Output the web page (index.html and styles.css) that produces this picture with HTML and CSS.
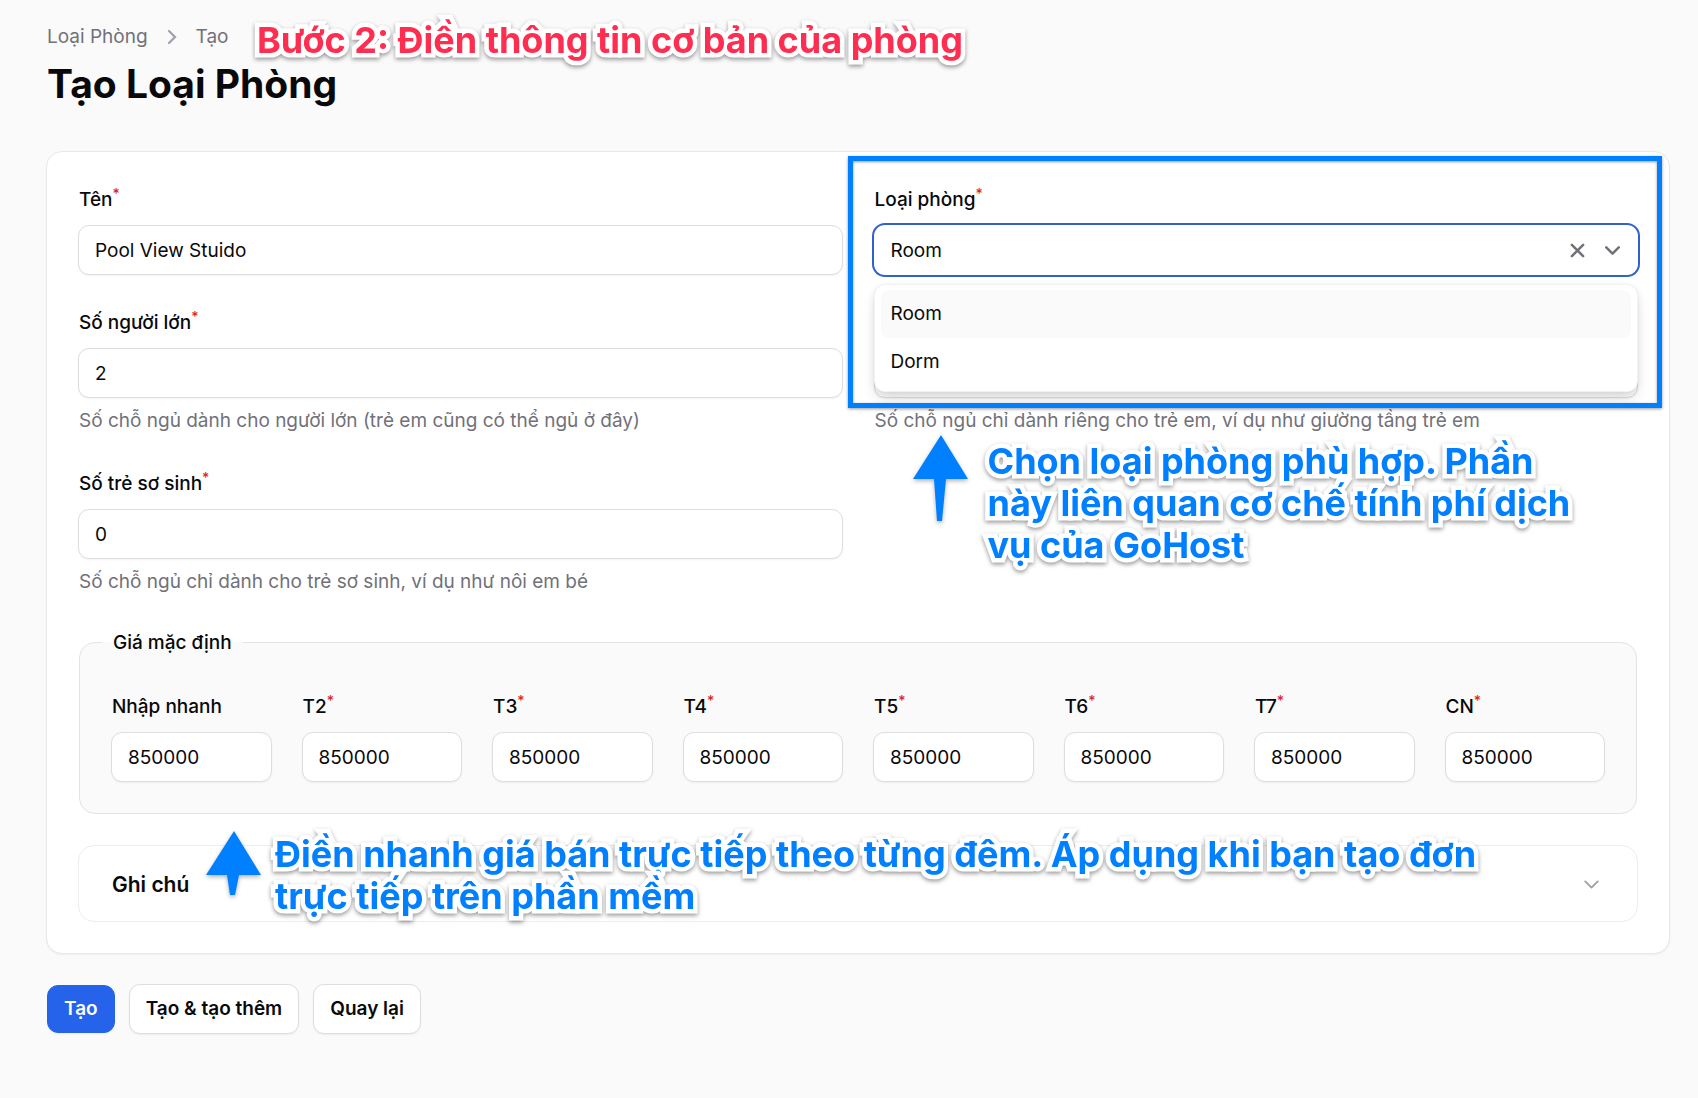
FILE: index.html
```
<!DOCTYPE html>
<html lang="vi">
<head>
    <meta charset="UTF-8">
    <meta name="viewport" content="width=device-width, initial-scale=1.0">
    <title>Tạo Loại Phòng</title>
    <link rel="stylesheet" href="styles.css">
</head>
<body>
    <main class="page">
        <header class="page-header">
            <nav class="breadcrumbs">
                <a href="#">Loại Phòng</a>
                <svg class="breadcrumb-icon" viewBox="0 0 24 24">
                    <path d="M8 4l8 8-8 8"/>
                </svg>
                <a href="#">Tạo</a>
            </nav>
            <h1 class="page-title">Tạo Loại Phòng</h1>
            <p class="note note-step">Bước 2: Điền thông tin cơ bản của phòng</p>
        </header>

        <form class="room-form">
            <div class="card">
                <div class="fields">
                    <div class="field">
                        <label for="name">Tên<sup>*</sup></label>
                        <input class="input" type="text" id="name" value="Pool View Stuido">
                    </div>

                    <div class="field field-type">
                        <label for="type">Loại phòng<sup>*</sup></label>
                        <div class="select-box">
                            <select id="type">
                                <option selected>Room</option>
                                <option>Dorm</option>
                            </select>
                            <button type="button" class="clear-btn" aria-label="Xóa">
                                <svg viewBox="0 0 24 24">
                                    <path d="M3 3l18 18M21 3L3 21"/>
                                </svg>
                            </button>
                            <svg class="select-arrow" viewBox="0 0 24 24">
                                <path d="M2 7l10 10L22 7"/>
                            </svg>
                        </div>
                        <div class="dropdown" role="listbox">
                            <div class="dropdown-item active" role="option">Room</div>
                            <div class="dropdown-item" role="option">Dorm</div>
                        </div>
                        <div class="highlight"></div>
                    </div>

                    <div class="field">
                        <label for="adults">Số người lớn<sup>*</sup></label>
                        <input class="input" type="text" id="adults" value="2">
                        <p class="hint">Số chỗ ngủ dành cho người lớn (trẻ em cũng có thể ngủ ở đây)</p>
                    </div>

                    <div class="field field-children">
                        <input class="input" type="text" id="children" aria-label="Số trẻ em">
                        <p class="hint">Số chỗ ngủ chỉ dành riêng cho trẻ em, ví dụ như giường tầng trẻ em</p>
                        <svg class="arrow arrow-type" viewBox="0 0 56 88">
                            <path d="M29 1L56 45H34L30 87H25L22 45H1z"/>
                        </svg>
                        <p class="note note-type">Chọn loại phòng phù hợp. Phần<br>này liên quan cơ chế tính phí dịch<br>vụ của GoHost</p>
                    </div>

                    <div class="field">
                        <label for="infants">Số trẻ sơ sinh<sup>*</sup></label>
                        <input class="input" type="text" id="infants" value="0">
                        <p class="hint">Số chỗ ngủ chỉ dành cho trẻ sơ sinh, ví dụ như nôi em bé</p>
                    </div>
                </div>

                <fieldset class="prices">
                    <legend>Giá mặc định</legend>
                    <div class="price-grid">
                        <div class="field">
                            <label for="quick">Nhập nhanh</label>
                            <input class="input" type="text" id="quick" value="850000">
                        </div>
                        <div class="field">
                            <label for="t2">T2<sup>*</sup></label>
                            <input class="input" type="text" id="t2" value="850000">
                        </div>
                        <div class="field">
                            <label for="t3">T3<sup>*</sup></label>
                            <input class="input" type="text" id="t3" value="850000">
                        </div>
                        <div class="field">
                            <label for="t4">T4<sup>*</sup></label>
                            <input class="input" type="text" id="t4" value="850000">
                        </div>
                        <div class="field">
                            <label for="t5">T5<sup>*</sup></label>
                            <input class="input" type="text" id="t5" value="850000">
                        </div>
                        <div class="field">
                            <label for="t6">T6<sup>*</sup></label>
                            <input class="input" type="text" id="t6" value="850000">
                        </div>
                        <div class="field">
                            <label for="t7">T7<sup>*</sup></label>
                            <input class="input" type="text" id="t7" value="850000">
                        </div>
                        <div class="field">
                            <label for="cn">CN<sup>*</sup></label>
                            <input class="input" type="text" id="cn" value="850000">
                        </div>
                    </div>
                </fieldset>

                <section class="notes">
                    <button type="button" class="notes-toggle">
                        <span>Ghi chú</span>
                        <svg viewBox="0 0 24 24">
                            <path d="M2 7l10 10L22 7"/>
                        </svg>
                    </button>
                    <svg class="arrow arrow-price" viewBox="0 0 56 66">
                        <path d="M29 1L56 45H34L30 65H25L22 45H1z"/>
                    </svg>
                    <p class="note note-price">Điền nhanh giá bán trực tiếp theo từng đêm. Áp dụng khi bạn tạo đơn<br>trực tiếp trên phần mềm</p>
                </section>
            </div>

            <div class="actions">
                <button type="submit" class="btn btn-primary">Tạo</button>
                <button type="button" class="btn">Tạo &amp; tạo thêm</button>
                <button type="button" class="btn">Quay lại</button>
            </div>
        </form>
    </main>
</body>
</html>
```
FILE: styles.css
```
* {
    box-sizing: border-box;
    margin: 0;
    padding: 0;
}

body {
    font-family: Inter, 'Open Sans', sans-serif;
    font-size: 19px;
    line-height: 32px;
    color: #09090b;
    background-color: #fafafa;
}

input,
select,
button {
    font: inherit;
    color: inherit;
}

.page {
    padding: 21px 28px 32px 46px;
}

/* Header */
.page-header {
    position: relative;
    margin-bottom: 39px;
}

.breadcrumbs {
    display: flex;
    align-items: center;
    gap: 12px;
    padding-left: 1px;
}

.breadcrumbs a {
    color: #71717a;
    text-decoration: none;
}

.breadcrumb-icon {
    width: 24px;
    height: 18px;
    fill: none;
    stroke: #a1a1aa;
    stroke-width: 3;
    stroke-linecap: round;
}

.page-title {
    padding: 3px 0 0 1px;
    font-size: 39px;
    font-weight: 700;
    line-height: 56px;
}

/* Card and fields */
.card {
    padding: 31px;
    background: white;
    border: 1px solid #e8e8ea;
    border-radius: 16px;
    box-shadow: 0 1px 2px rgba(0, 0, 0, 0.05);
}

.fields {
    display: grid;
    grid-template-columns: 1fr 1fr;
    gap: 31px;
}

.field {
    position: relative;
    min-width: 0;
}

.field label {
    display: block;
    padding-left: 1px;
    margin-bottom: 8px;
    font-weight: 500;
    line-height: 34px;
}

.field sup {
    font-size: 14px;
    line-height: 0;
    color: #dc2626;
}

/* the open list covers the label row of this field */
.field-children {
    padding-top: 42px;
}

.input {
    display: block;
    width: 100%;
    height: 50px;
    padding: 0 16px;
    background: white;
    border: 1px solid #dededf;
    border-radius: 11px;
    box-shadow: 0 1px 2px rgba(0, 0, 0, 0.05);
}

.hint {
    margin-top: 8px;
    padding-left: 1px;
    line-height: 30px;
    color: #71717a;
}

.select-box {
    display: flex;
    align-items: center;
    height: 50px;
    padding-right: 18px;
    background: white;
    border-radius: 11px;
    box-shadow: 0 0 0 2px #2f62cc;
}

.select-box select {
    flex: 1;
    height: 50px;
    padding: 1px 0 0 17px;
    border: none;
    background: none;
    appearance: none;
    outline: none;
}

.clear-btn {
    display: flex;
    margin-right: 20px;
    border: none;
    background: none;
    cursor: pointer;
}

.clear-btn svg,
.select-arrow,
.notes-toggle svg {
    width: 15px;
    height: 15px;
    fill: none;
    stroke: #71717a;
    stroke-width: 4;
    stroke-linecap: round;
    stroke-linejoin: round;
}

.dropdown {
    position: absolute;
    z-index: 2;
    top: 101px;
    left: 0;
    right: 0;
    padding: 5px 6px;
    background: white;
    border: 1px solid #f2f2f3;
    border-radius: 11px;
    box-shadow: 0 10px 16px -2px rgba(0, 0, 0, 0.1), 0 2px 6px rgba(0, 0, 0, 0.1);
}

.dropdown-item {
    padding: 8px 10px;
    border-radius: 8px;
}

.dropdown-item.active {
    background: #fafafa;
}

/* Default prices */
.prices {
    min-width: 0;
    margin: 28px 1px 31px;
    padding: 31px;
    background: #fafafa;
    border: 1px solid #e4e4e7;
    border-radius: 16px;
}

.prices legend {
    margin-left: -9px;
    padding: 2px 11px 0;
    font-weight: 500;
}

.price-grid {
    display: grid;
    grid-template-columns: repeat(8, 1fr);
    gap: 30px;
}

/* Notes */
.notes {
    position: relative;
}

.notes-toggle {
    display: flex;
    justify-content: space-between;
    align-items: center;
    width: 100%;
    height: 77px;
    padding: 2px 38px 0 33px;
    font-size: 21px;
    font-weight: 600;
    background: white;
    border: 1px solid #ededee;
    border-radius: 16px;
    cursor: pointer;
}

.notes-toggle svg {
    stroke: #a1a1aa;
    stroke-width: 3;
}

/* Buttons */
.actions {
    display: flex;
    align-items: center;
    gap: 14px;
    margin-top: 30px;
    padding-left: 1px;
}

.btn {
    height: 50px;
    padding: 0 16px;
    font-weight: 600;
    background: white;
    border: 1px solid #dededf;
    border-radius: 11px;
    box-shadow: 0 1px 2px rgba(0, 0, 0, 0.05);
    cursor: pointer;
}

.btn-primary {
    height: 48px;
    color: white;
    background: #2563eb;
    border-color: #2563eb;
}

/* Guide notes over the form */
.note {
    position: absolute;
    z-index: 3;
    font-size: 36px;
    font-weight: 700;
    line-height: 42px;
    white-space: nowrap;
    color: #007fff;
    -webkit-text-stroke: 9px white;
    stroke-linejoin: round;
    paint-order: stroke fill;
    filter: drop-shadow(0 2px 2px rgba(0, 0, 0, 0.4));
}

.note-step {
    top: -2px;
    left: 211px;
    color: #ff2d50;
}

.note-type {
    top: 134px;
    left: 114px;
}

.note-price {
    top: -12px;
    left: 197px;
}

.arrow {
    position: absolute;
    z-index: 3;
    width: 56px;
    fill: #007fff;
    filter: drop-shadow(0 2px 2px rgba(0, 0, 0, 0.3));
}

.arrow-type {
    top: 128px;
    left: 38px;
}

.arrow-price {
    top: -15px;
    left: 127px;
}

.highlight {
    position: absolute;
    z-index: 3;
    top: -27px;
    left: -26px;
    right: -24px;
    height: 252px;
    border: 5px solid #007fff;
    box-shadow: 0 1px 3px rgba(0, 0, 0, 0.4), inset 0 1px 3px rgba(0, 0, 0, 0.4);
    pointer-events: none;
}
```
